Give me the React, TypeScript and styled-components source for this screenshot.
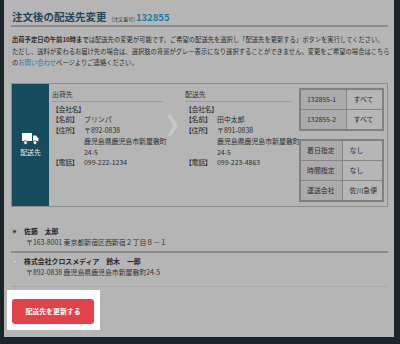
import styled, { createGlobalStyle } from 'styled-components';

const GlobalStyle = createGlobalStyle`
  html, body {
    margin: 0;
    padding: 0;
    background: #1c2629;
  }
  body {
    font-family: "Noto Sans CJK JP", "Noto Sans", sans-serif;
    color: #2e2e2e;
  }
`;

const FS = '6.9px';

function TruckIcon() {
  return (
    <svg width="17" height="12" viewBox="0 0 17 12" fill="#ffffff">
      <rect x="0" y="0" width="10" height="8" rx="0.5" />
      <path d="M11 2.5 h3 l2.5 3 v2.5 h-5.5 z" />
      <circle cx="3.5" cy="9.6" r="1.9" stroke="#174b5e" strokeWidth="0.8" />
      <circle cx="13" cy="9.6" r="1.9" stroke="#174b5e" strokeWidth="0.8" />
    </svg>
  );
}

function Chevron() {
  return (
    <svg width="11" height="21" viewBox="0 0 11 21" fill="#c6c6c6">
      <polygon points="0,0 4,0 11,10.5 4,21 0,21 6,10.5" />
    </svg>
  );
}

type AddressData = {
  company: string;
  name: string;
  address: string[];
  phone: string;
};

const shipper: AddressData = {
  company: '',
  name: 'プリンパ',
  address: ['〒892-0838', '鹿児島県鹿児島市新屋敷町', '24-5'],
  phone: '099-222-1234',
};

const receiver: AddressData = {
  company: '',
  name: '田中太郎',
  address: ['〒891-0838', '鹿児島県鹿児島市新屋敷町', '24-5'],
  phone: '099-223-4863',
};

function AddressColumn({ title, data, width }: { title: string; data: AddressData; width: number }) {
  return (
    <Column $width={width}>
      <ColumnHead>{title}</ColumnHead>
      <InfoGrid>
        <Label>【会社名】</Label>
        <Value>{data.company}</Value>
        <Label>【名前】</Label>
        <Value>{data.name}</Value>
        <Label>【住所】</Label>
        <Value>
          {data.address.map((l) => (
            <div key={l}>{l}</div>
          ))}
        </Value>
        <Label>【電話】</Label>
        <Value>{data.phone}</Value>
      </InfoGrid>
    </Column>
  );
}

export default function App() {
  return (
    <>
      <GlobalStyle />
      <Page>
        <Panel>
          <TitleRow>
            <Title>注文後の配送先変更</Title>
            <OrderLabel>[注文番号]</OrderLabel>
            <OrderNo>132855</OrderNo>
          </TitleRow>
          <Lead>
            <Line $width={366}><b>出荷予定日の午前10時まで</b>は配送先の変更が可能です。ご希望の配送先を選択し「配送先を更新する」ボタンを実行してください。</Line>
            <Line $width={375}>ただし、送料が変わるお届け先の場合は、選択肢の背景がグレー表示になり選択することができません。変更をご希望の場合はこちら</Line>
            <Line>の<Link>お問い合わせ</Link>ページよりご連絡ください。</Line>
          </Lead>

          <DeliveryBox>
            <SideTab>
              <TruckIcon />
              <SideLabel>配送先</SideLabel>
            </SideTab>
            <AddressColumn title="出荷先" data={shipper} width={111} />
            <ArrowCell>
              <Chevron />
            </ArrowCell>
            <AddressColumn title="配送先" data={receiver} width={107} />
            <Tables>
              <Table>
                <tbody>
                  <tr><Th $w={46}>132855-1</Th><Td>すべて</Td></tr>
                  <tr><Th $w={46}>132855-2</Th><Td>すべて</Td></tr>
                </tbody>
              </Table>
              <Table>
                <tbody>
                  <tr><Th $w={42}>着日指定</Th><Td>なし</Td></tr>
                  <tr><Th $w={42}>時間指定</Th><Td>なし</Td></tr>
                  <tr><Th $w={42}>運送会社</Th><Td>佐川急便</Td></tr>
                </tbody>
              </Table>
            </Tables>
          </DeliveryBox>

          <Choices>
            <Choice $first>
              <Radio $checked />
              <ChoiceText>
                <ChoiceName>佐藤　太郎</ChoiceName>
                <ChoiceAddr>〒163-8001 東京都新宿区西新宿２丁目８－１</ChoiceAddr>
              </ChoiceText>
            </Choice>
            <Choice>
              <Radio />
              <ChoiceText>
                <ChoiceName>株式会社クロスメディア　鈴木　一郎</ChoiceName>
                <ChoiceAddr>〒892-0838 鹿児島県鹿児島市新屋敷町24-5</ChoiceAddr>
              </ChoiceText>
            </Choice>
          </Choices>

          <Spotlight>
            <UpdateButton>配送先を更新する</UpdateButton>
          </Spotlight>
        </Panel>
      </Page>
    </>
  );
}

const Page = styled.div`
  width: 400px;
  height: 344px;
  padding-left: 4px;
  box-sizing: border-box;
  overflow: hidden;
`;

const Panel = styled.div`
  width: 390px;
  height: 337px;
  background: #b5b5b5;
  box-sizing: border-box;
  padding: 8px 6px 0 7px;
`;

const TitleRow = styled.div`
  display: flex;
  align-items: baseline;
  height: 17px;
  padding-left: 1px;
  border-bottom: 2px solid #8b8b8b;
`;

const Title = styled.h1`
  margin: 0;
  font-size: 10.5px;
  line-height: 17px;
  font-weight: 700;
  color: #274655;
`;

const OrderLabel = styled.span`
  font-size: 5px;
  margin-left: 5px;
  color: #3a3a3a;
`;

const OrderNo = styled.span`
  font-size: 9.5px;
  font-weight: 700;
  color: #1b7ca2;
  margin-left: 1px;
`;

const Lead = styled.div`
  margin-top: 7px;
  padding-left: 1px;
  font-size: 6.3px;
  line-height: 11.5px;
  color: #2e2e2e;
  b {
    font-weight: 700;
  }
`;

const Line = styled.div<{ $width?: number }>`
  white-space: nowrap;
  width: ${(p) => (p.$width ? `${p.$width}px` : 'auto')};
  text-align: ${(p) => (p.$width ? 'justify' : 'left')};
  text-align-last: ${(p) => (p.$width ? 'justify' : 'auto')};
  text-justify: inter-character;
`;

const Link = styled.span`
  color: #1b7ca2;
`;

const DeliveryBox = styled.div`
  margin-top: 14px;
  height: 124px;
  box-sizing: border-box;
  border: 1px solid #8d8d8d;
  display: flex;
  align-items: flex-start;
`;

const SideTab = styled.div`
  width: 37px;
  height: 100%;
  background: #174b5e;
  display: flex;
  flex-direction: column;
  align-items: center;
  justify-content: center;
  gap: 3px;
`;

const SideLabel = styled.div`
  font-size: ${FS};
  line-height: 8px;
  color: #e6e6e6;
`;

const Column = styled.div<{ $width: number }>`
  width: ${(p) => p.$width}px;
  margin-left: 3px;
`;

const ColumnHead = styled.div`
  font-size: ${FS};
  line-height: 10px;
  padding-top: 5px;
  padding-bottom: 2px;
  border-bottom: 1px solid #9c9c9c;
  color: #333;
`;

const InfoGrid = styled.div`
  display: grid;
  grid-template-columns: 32px 1fr;
  margin-top: 2px;
  font-size: ${FS};
  line-height: 10.8px;
`;

const Label = styled.div`
  color: #262626;
  white-space: nowrap;
  letter-spacing: -0.3px;
`;

const Value = styled.div`
  color: #2e2e2e;
  min-height: 10.8px;
  white-space: nowrap;
`;

const ArrowCell = styled.div`
  width: 20px;
  display: flex;
  justify-content: center;
  padding-top: 31px;
  margin-left: -1px;
`;

const Tables = styled.div`
  margin-left: auto;
  margin-right: 3px;
  margin-top: 4px;
  width: 85px;
  display: flex;
  flex-direction: column;
  gap: 8px;
`;

const Table = styled.table`
  width: 100%;
  border-collapse: collapse;
  border: 2px solid #808080;
  font-size: ${FS};
`;

const Th = styled.td<{ $w: number }>`
  width: ${(p) => p.$w}px;
  height: 19px;
  padding: 0 0 0 6px;
  background: #ababab;
  border: 1px solid #858585;
  color: #2e2e2e;
  white-space: nowrap;
  box-sizing: border-box;
`;

const Td = styled.td`
  height: 19px;
  padding: 0 0 0 7px;
  background: #b6b6b6;
  border: 1px solid #858585;
  color: #2e2e2e;
  white-space: nowrap;
`;

const Choices = styled.div`
  margin-top: 19px;
`;

const Choice = styled.div<{ $first?: boolean }>`
  display: flex;
  align-items: flex-start;
  padding: ${(p) => (p.$first ? '0 0 3px' : '3px 0 8px')};
  border-bottom: ${(p) => (p.$first ? '2px solid #8b8b8b' : '1px solid #a9a9a9')};
`;

const Radio = styled.span<{ $checked?: boolean }>`
  width: 5px;
  height: 5px;
  margin: 3px 7px 0 1px;
  border-radius: 50%;
  box-sizing: border-box;
  border: 1px solid ${(p) => (p.$checked ? '#9a9a9a' : '#a8a8a8')};
  background: ${(p) => (p.$checked ? 'radial-gradient(circle, #444 0 1.3px, #cfcfcf 1.6px)' : '#c9c9c9')};
  flex-shrink: 0;
`;

const ChoiceText = styled.div`
  font-size: ${FS};
  line-height: 11px;
`;

const ChoiceName = styled.div`
  font-weight: 700;
  color: #262626;
`;

const ChoiceAddr = styled.div`
  padding-left: 2px;
  color: #333;
`;

const Spotlight = styled.div`
  margin: 3px 0 0 -4px;
  width: 93px;
  height: 40px;
  box-sizing: border-box;
  background: #ffffff;
  padding: 9px 6px 0 5px;
`;

const UpdateButton = styled.button`
  display: block;
  width: 82px;
  height: 25px;
  border: none;
  border-radius: 3px;
  background: #e2434b;
  color: #ffffff;
  font-family: "Noto Sans CJK JP", sans-serif;
  font-size: ${FS};
  font-weight: 700;
  padding: 0;
  cursor: pointer;
`;
